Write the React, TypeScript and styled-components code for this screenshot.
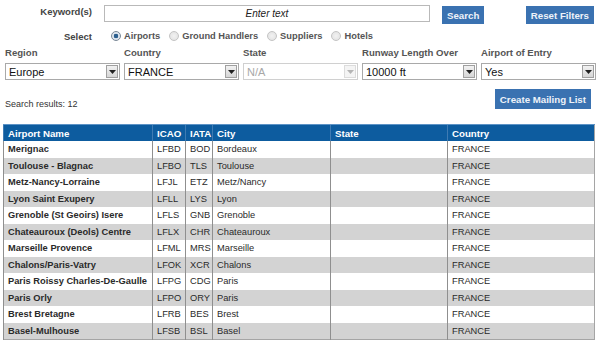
import React from 'react';
import styled, { createGlobalStyle } from 'styled-components';

const GlobalStyle = createGlobalStyle`
  html, body {
    margin: 0;
    padding: 0;
    background: #ffffff;
  }
  body {
    font-family: 'Liberation Sans', Arial, sans-serif;
    color: #333333;
  }
`;

type Airport = {
  name: string;
  icao: string;
  iata: string;
  city: string;
  state: string;
  country: string;
};

const airports: Airport[] = [
  { name: 'Merignac', icao: 'LFBD', iata: 'BOD', city: 'Bordeaux', state: '', country: 'FRANCE' },
  { name: 'Toulouse - Blagnac', icao: 'LFBO', iata: 'TLS', city: 'Toulouse', state: '', country: 'FRANCE' },
  { name: 'Metz-Nancy-Lorraine', icao: 'LFJL', iata: 'ETZ', city: 'Metz/Nancy', state: '', country: 'FRANCE' },
  { name: 'Lyon Saint Exupery', icao: 'LFLL', iata: 'LYS', city: 'Lyon', state: '', country: 'FRANCE' },
  { name: 'Grenoble (St Geoirs) Isere', icao: 'LFLS', iata: 'GNB', city: 'Grenoble', state: '', country: 'FRANCE' },
  { name: 'Chateauroux (Deols) Centre', icao: 'LFLX', iata: 'CHR', city: 'Chateauroux', state: '', country: 'FRANCE' },
  { name: 'Marseille Provence', icao: 'LFML', iata: 'MRS', city: 'Marseille', state: '', country: 'FRANCE' },
  { name: 'Chalons/Paris-Vatry', icao: 'LFOK', iata: 'XCR', city: 'Chalons', state: '', country: 'FRANCE' },
  { name: 'Paris Roissy Charles-De-Gaulle', icao: 'LFPG', iata: 'CDG', city: 'Paris', state: '', country: 'FRANCE' },
  { name: 'Paris Orly', icao: 'LFPO', iata: 'ORY', city: 'Paris', state: '', country: 'FRANCE' },
  { name: 'Brest Bretagne', icao: 'LFRB', iata: 'BES', city: 'Brest', state: '', country: 'FRANCE' },
  { name: 'Basel-Mulhouse', icao: 'LFSB', iata: 'BSL', city: 'Basel', state: '', country: 'FRANCE' },
];

const filters = [
  { label: 'Region', value: 'Europe', disabled: false },
  { label: 'Country', value: 'FRANCE', disabled: false },
  { label: 'State', value: 'N/A', disabled: true },
  { label: 'Runway Length Over', value: '10000 ft', disabled: false },
  { label: 'Airport of Entry', value: 'Yes', disabled: false },
];

const kinds = ['Airports', 'Ground Handlers', 'Suppliers', 'Hotels'];

export default function App() {
  return (
    <Page>
      <GlobalStyle />
      <TopRow>
        <FieldLabel>Keyword(s)</FieldLabel>
        <KeywordInput placeholder="Enter text" />
        <BlueButton>Search</BlueButton>
        <BlueButton $push>Reset Filters</BlueButton>
      </TopRow>

      <RadioRow>
        <FieldLabel>Select</FieldLabel>
        <RadioGroup>
          {kinds.map((k, i) => (
            <RadioOption key={k}>
              <RadioDot $checked={i === 0} />
              {k}
            </RadioOption>
          ))}
        </RadioGroup>
      </RadioRow>

      <FilterGrid>
        {filters.map((f) => (
          <FilterCell key={f.label}>
            <FilterLabel>{f.label}</FilterLabel>
            <SelectBox $disabled={f.disabled}>
              <span>{f.value}</span>
              <SelectArrow $disabled={f.disabled}>
                <svg width="7" height="4" viewBox="0 0 7 4">
                  <path d="M0 0 L7 0 L3.5 4 Z" fill={f.disabled ? '#b5b5b5' : '#222'} />
                </svg>
              </SelectArrow>
            </SelectBox>
          </FilterCell>
        ))}
      </FilterGrid>

      <ResultsRow>
        <ResultsCount>Search results: 12</ResultsCount>
        <BlueButton $tall>Create Mailing List</BlueButton>
      </ResultsRow>

      <Results>
        <colgroup>
          <col style={{ width: 149 }} />
          <col style={{ width: 33 }} />
          <col style={{ width: 27 }} />
          <col style={{ width: 118 }} />
          <col style={{ width: 117 }} />
          <col />
        </colgroup>
        <thead>
          <tr>
            <Th>Airport Name</Th>
            <Th>ICAO</Th>
            <Th>IATA</Th>
            <Th>City</Th>
            <Th>State</Th>
            <Th>Country</Th>
          </tr>
        </thead>
        <tbody>
          {airports.map((a, i) => (
            <Row key={a.icao} $alt={i % 2 === 1}>
              <Td $bold>{a.name}</Td>
              <Td>{a.icao}</Td>
              <Td>{a.iata}</Td>
              <Td>{a.city}</Td>
              <Td>{a.state}</Td>
              <Td>{a.country}</Td>
            </Row>
          ))}
        </tbody>
      </Results>
    </Page>
  );
}

const Page = styled.div`
  width: 598px;
  padding-top: 5px;
  box-sizing: border-box;
`;

const TopRow = styled.div`
  display: flex;
  align-items: flex-start;
  padding-right: 4px;
  height: 19px;
`;

const FieldLabel = styled.div`
  width: 92px;
  text-align: right;
  font-size: 9.5px;
  font-weight: bold;
  color: #444;
  padding-top: 1px;
  flex-shrink: 0;
`;

const KeywordInput = styled.input`
  width: 326px;
  height: 17px;
  margin-left: 12px;
  box-sizing: border-box;
  border: 1px solid #b9b9b9;
  font-family: 'Liberation Sans', Arial, sans-serif;
  font-size: 10px;
  font-style: italic;
  text-align: center;
  padding: 0;
  outline: none;
  &::placeholder {
    color: #222;
  }
`;

const BlueButton = styled.button<{ $push?: boolean; $tall?: boolean }>`
  margin-left: ${(p) => (p.$push ? 'auto' : '12px')};
  height: ${(p) => (p.$tall ? '20px' : '18px')};
  margin-top: 1px;
  padding: 0 5px;
  border: none;
  background: #3a72b1;
  color: #eef3f9;
  font-family: 'Liberation Sans', Arial, sans-serif;
  font-size: 9.7px;
  font-weight: bold;
  cursor: pointer;
`;

const RadioRow = styled.div`
  display: flex;
  align-items: center;
  margin-top: 5px;
  height: 13px;
`;

const RadioGroup = styled.div`
  display: flex;
  align-items: center;
  gap: 9px;
  margin-left: 19px;
`;

const RadioOption = styled.label`
  display: flex;
  align-items: center;
  gap: 3px;
  font-size: 9.3px;
  font-weight: bold;
  color: #555;
`;

const RadioDot = styled.span<{ $checked: boolean }>`
  width: 10px;
  height: 10px;
  box-sizing: border-box;
  border-radius: 50%;
  border: 1px solid ${(p) => (p.$checked ? '#7a8896' : '#c4c4c4')};
  background: ${(p) =>
    p.$checked
      ? 'radial-gradient(circle, #2c5f8e 0, #2c5f8e 2px, #dfe6ee 2.6px, #dfe6ee 100%)'
      : 'radial-gradient(circle, #f2f2f2 0, #e0e0e0 100%)'};
`;

const FilterGrid = styled.div`
  display: grid;
  grid-template-columns: repeat(5, 115px);
  column-gap: 4px;
  padding-left: 5px;
  margin-top: 5px;
`;

const FilterCell = styled.div`
  display: flex;
  flex-direction: column;
`;

const FilterLabel = styled.div`
  font-size: 9.6px;
  font-weight: bold;
  color: #555;
  line-height: 12px;
  margin-bottom: 4px;
`;

const SelectBox = styled.div<{ $disabled: boolean }>`
  display: flex;
  align-items: center;
  justify-content: space-between;
  height: 17px;
  box-sizing: border-box;
  border: 1px solid ${(p) => (p.$disabled ? '#d0d0d0' : '#a9a9a9')};
  padding: 0 1px 0 3px;
  font-size: 11px;
  color: ${(p) => (p.$disabled ? '#a8a8a8' : '#111')};
  background: #fff;
`;

const SelectArrow = styled.span<{ $disabled: boolean }>`
  display: flex;
  align-items: center;
  justify-content: center;
  width: 12px;
  height: 13px;
  box-sizing: border-box;
  border: 1px solid ${(p) => (p.$disabled ? '#dcdcdc' : '#a0a0a0')};
  background: ${(p) => (p.$disabled ? '#f4f4f4' : 'linear-gradient(#f2f2f2, #d6d6d6)')};
`;

const ResultsRow = styled.div`
  display: flex;
  align-items: flex-end;
  justify-content: space-between;
  padding: 0 7px 0 5px;
  margin-top: 8px;
`;

const ResultsCount = styled.div`
  font-size: 9px;
  color: #333;
`;

const Results = styled.table`
  width: 592px;
  margin: 15px 0 0 3px;
  border-collapse: collapse;
  table-layout: fixed;
  border: 1px solid #a5a5a5;
`;

const Th = styled.th`
  background: #0d5c9f;
  color: #ffffff;
  font-size: 9.7px;
  font-weight: bold;
  text-align: left;
  padding: 0 4px;
  height: 16px;
  border-top: 1px solid #5d93c6;
  border-left: 1px solid #3f7bb3;
  white-space: nowrap;
`;

const Row = styled.tr<{ $alt: boolean }>`
  background: ${(p) => (p.$alt ? '#d3d3d3' : '#ffffff')};
  height: 16.5px;
`;

const Td = styled.td<{ $bold?: boolean }>`
  font-size: 9.3px;
  font-weight: ${(p) => (p.$bold ? 'bold' : 'normal')};
  color: #2a2a2a;
  padding: 0 4px;
  border-left: 1px solid #8f8f8f;
  white-space: nowrap;
  overflow: hidden;
`;
